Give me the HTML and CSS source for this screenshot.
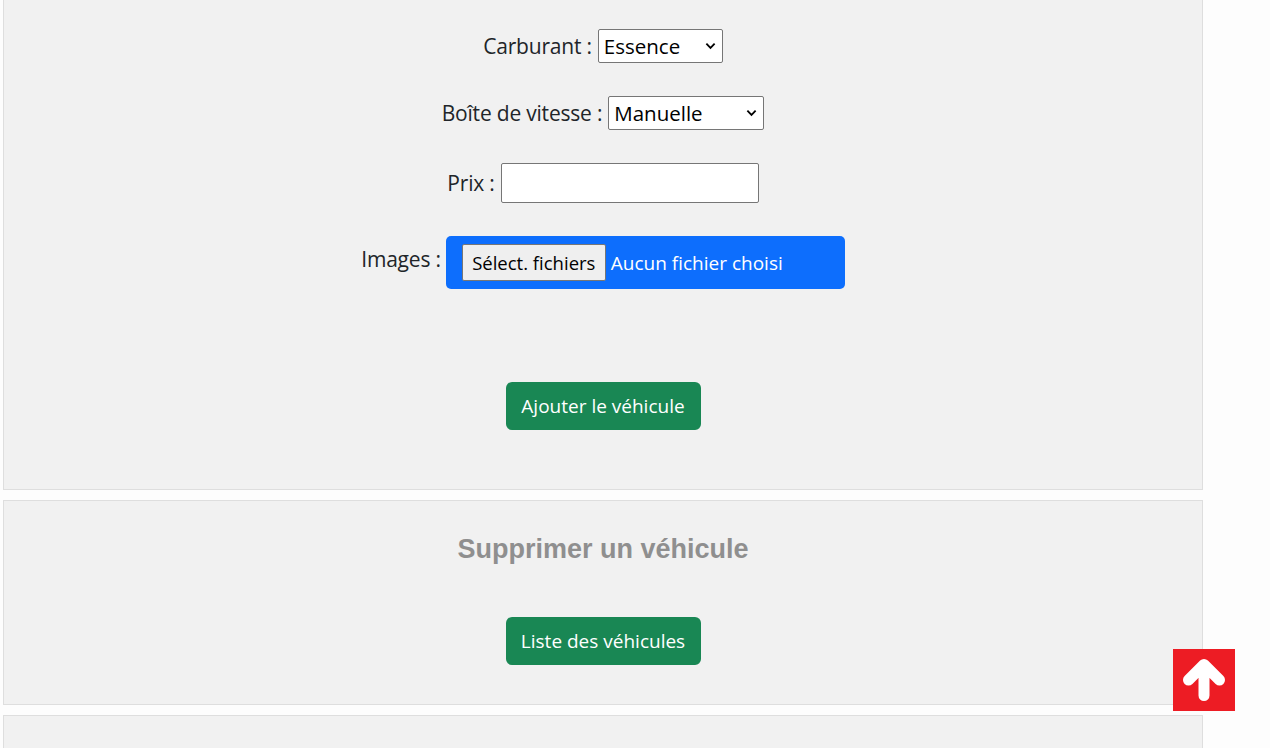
FILE: index.html
```html
<!DOCTYPE html>
<html lang="fr">
<head>
<meta charset="utf-8">
<title>Ajouter un véhicule</title>
<link rel="stylesheet" href="styles.css">
</head>
<body>
<main class="page">
  <section class="card card-first">
    <form class="form">
      <div class="row">
        <label class="label">Carburant :</label>
        <div class="select select-fuel"><span>Essence</span><svg class="chev" viewBox="0 0 12 8"><path d="M1.5 1.5 6 6l4.5-4.5" fill="none" stroke="#000" stroke-width="2"/></svg></div>
      </div>
      <div class="row">
        <label class="label">Boîte de vitesse :</label>
        <div class="select select-gear"><span>Manuelle</span><svg class="chev" viewBox="0 0 12 8"><path d="M1.5 1.5 6 6l4.5-4.5" fill="none" stroke="#000" stroke-width="2"/></svg></div>
      </div>
      <div class="row">
        <label class="label">Prix :</label>
        <div class="input"></div>
      </div>
      <div class="row row-file">
        <label class="label label-file">Images :</label>
        <div class="file">
          <span class="file-btn">Sélect. fichiers</span>
          <span class="file-text">Aucun fichier choisi</span>
        </div>
      </div>
      <div class="actions actions-add">
        <button type="button" class="btn">Ajouter le véhicule</button>
      </div>
    </form>
  </section>
  <section class="card card-delete">
    <h2 class="title">Supprimer un véhicule</h2>
    <div class="actions">
      <button type="button" class="btn">Liste des véhicules</button>
    </div>
  </section>
  <section class="card card-last"></section>
</main>
<a class="to-top" href="#">
  <svg viewBox="0 0 62 62" width="62" height="62"><path d="M15.5 31 31 15.5 46.5 31M31 16v30.5" fill="none" stroke="#fff" stroke-width="11" stroke-linecap="round" stroke-linejoin="round"/></svg>
</a>
</body>
</html>
```
FILE: styles.css
```css
html, body {
  margin: 0;
  padding: 0;
  background: #fdfdfd;
  overflow: hidden;
}
body {
  font-family: "Open Sans", "Noto Sans", sans-serif;
  color: #212529;
}
.page {
  width: 1200px;
  margin-left: 3px;
  display: flex;
  flex-direction: column;
  gap: 10px;
}
.card {
  box-sizing: border-box;
  background: #f1f1f1;
  border: 1px solid #dedede;
}
.card-first {
  border-top: 0;
  padding: 29px 0 59px;
}
.form {
  display: flex;
  flex-direction: column;
  align-items: center;
  gap: 33px;
}
.row {
  display: flex;
  align-items: center;
  gap: 6px;
  font-size: 21px;
}
.label {
  letter-spacing: -0.2px;
}
.select {
  box-sizing: border-box;
  height: 34px;
  background: #fff;
  border: 1px solid #767676;
  border-radius: 2px;
  display: flex;
  align-items: center;
  justify-content: space-between;
  padding: 0 6px 0 5px;
  color: #000;
  font-size: 20.5px;
}
.select-fuel { width: 125px; }
.select-gear { width: 156px; }
.chev { width: 11px; height: 8px; }
.input {
  box-sizing: border-box;
  width: 258px;
  height: 40px;
  background: #fff;
  border: 1px solid #767676;
  border-radius: 2px;
}
.row-file { align-items: flex-start; gap: 5px; }
.label-file { margin-top: 9px; }
.file {
  box-sizing: border-box;
  width: 399px;
  height: 53px;
  background: #0d6efd;
  border-radius: 5px;
  display: flex;
  align-items: center;
  padding-left: 16px;
  gap: 5px;
}
.file-btn {
  box-sizing: border-box;
  height: 37px;
  width: 144px;
  justify-content: center;
  display: flex;
  align-items: center;
  background: #efefef;
  border: 1px solid #767676;
  border-radius: 2px;
  color: #000;
  font-size: 18.5px;
}
.file-text {
  color: #fff;
  font-size: 19px;
}
.actions {
  display: flex;
  justify-content: center;
}
.actions-add { margin-top: 60px; }
.btn {
  box-sizing: border-box;
  width: 195px;
  height: 48px;
  border: 0;
  border-radius: 6px;
  background: #198754;
  color: #fff;
  font-family: "Open Sans", "Noto Sans", sans-serif;
  font-size: 19px;
  padding: 0;
}
.card-delete {
  height: 205px;
  padding-top: 27px;
}
.title {
  margin: 0 0 47px;
  text-align: center;
  font-family: "Liberation Sans", Arial, sans-serif;
  font-weight: bold;
  font-size: 27px;
  line-height: 42px;
  color: #8f8f8f;
}
.card-last {
  height: 60px;
}
.to-top {
  position: fixed;
  left: 1173px;
  top: 649px;
  width: 62px;
  height: 62px;
  background: #ed1c24;
  display: block;
}
.to-top svg { display: block; }
```
